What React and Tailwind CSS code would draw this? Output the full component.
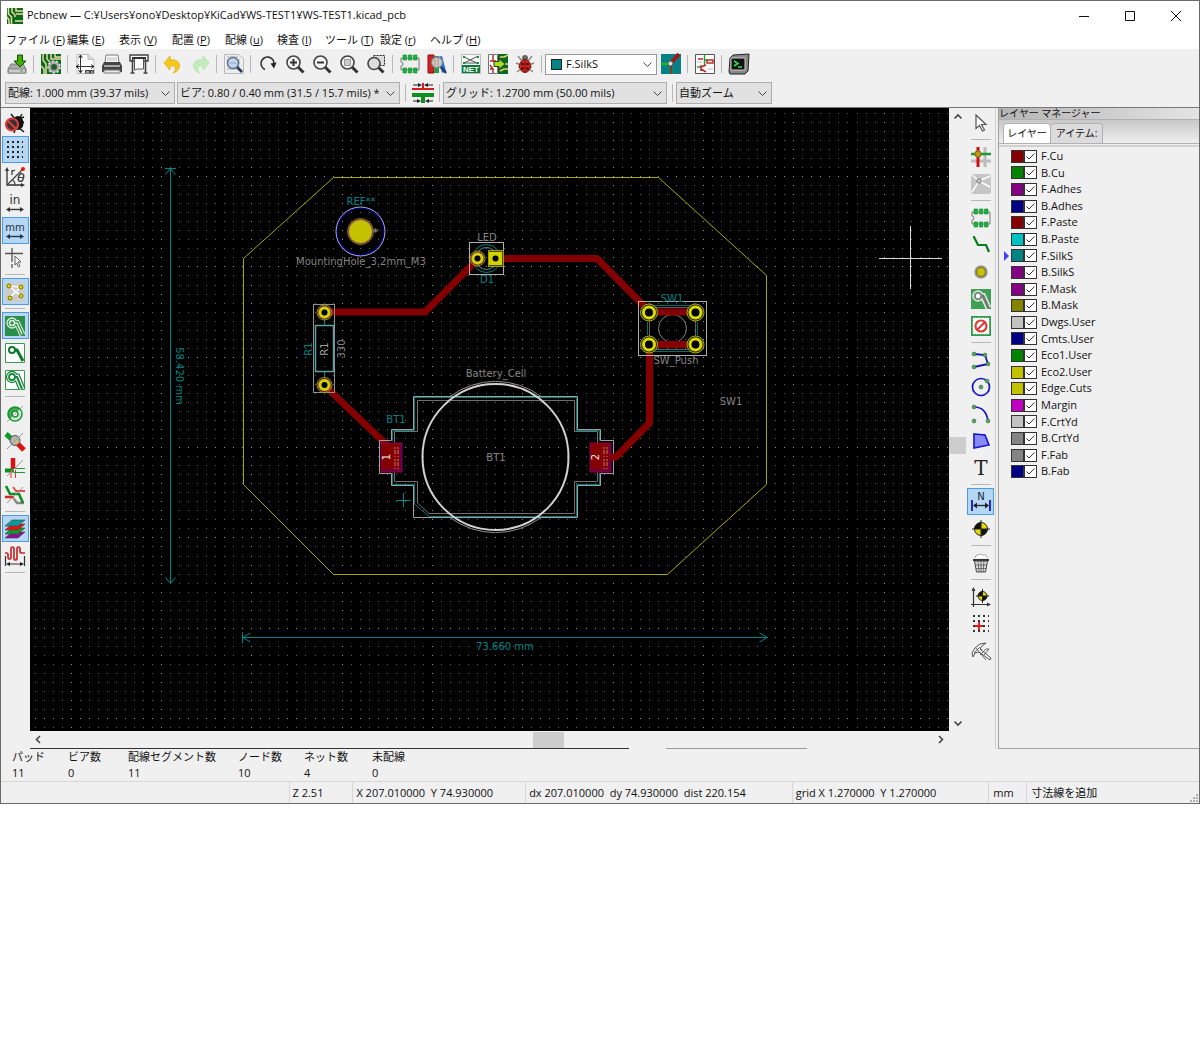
import React, { useState } from 'react';

// ---------- icons (all drawn on a 20x20 box) ----------
const Svg = ({ children }) => (
  <svg viewBox="0 0 20 20" className="h-5 w-5 shrink-0 overflow-visible" fill="none" stroke="none">{children}</svg>
);

const Slash = () => <path d="M2 18 18 2" stroke="#999" />;
const Lens = ({ children }) => (
  <Svg>
    <path d="m12.500 12.500 6 6" stroke="#333" strokeWidth="3" />
    <circle cx="8.500" cy="8.500" r="6.500" fill="#f4f4f4" stroke="#444" strokeWidth="1.600" />
    {children}
  </Svg>
);
const Track = ({ color }) => (
  <>
    <path d="M7 7h5l6 11" stroke={color} strokeWidth="3" />
    <circle cx="7" cy="7" r="3" fill="#fff" stroke={color} strokeWidth="2" />
  </>
);

const icons = {
  save: (
    <Svg>
      <path d="M4 10h12l3 5v4H1v-4z" fill="#aaa" stroke="#777" />
      <path d="M1.500 15h17v4h-17z" fill="#ccc" stroke="#888" />
      <path d="M10.500 1h5v6h3.500l-6 6-6-6h3.500z" fill="#3fae00" stroke="#174d00" />
      <path d="M13 17h3" stroke="#4a4" />
    </Svg>
  ),
  board: (
    <Svg>
      <path d="M0 0h20v20H0z" fill="#0a6a1c" />
      <path d="M2 0v6l3 4v10M6 0v5l3 3M10 0v5h10M0 12l3 3v5M14 0v3h6" stroke="#e6d9a0" strokeWidth="1.500" />
      <circle cx="13" cy="13" r="4.500" stroke="#aaa" strokeWidth="3" />
      <circle cx="13" cy="13" r="6" stroke="#ddd" strokeWidth="1.600" strokeDasharray="2.200 2" />
      <circle cx="13" cy="13" r="2.500" stroke="#555" />
    </Svg>
  ),
  sheet: (
    <Svg>
      <path d="M2 .500h11l6 5v14H2z" fill="#fff" stroke="#bbb" />
      <path d="M13 .500v5h6" fill="#ddd" stroke="#bbb" />
      <path d="M5.500 1v18M1 12.500h18M3.500 4l2-3 2 3M3.500 16l2 3 2-3M4 10.500l-3 2 3 2M16 10.500l3 2-3 2" stroke="#333" />
      <path d="M10 16h9v3.500h-9z" fill="#444" />
      <path d="M11 18h3m2 0h2" stroke="#fff" />
    </Svg>
  ),
  print: (
    <Svg>
      <path d="M4 1h12l1 8H3z" fill="#fff" stroke="#777" />
      <path d="M5 4h10M5 6h10" stroke="#bbb" />
      <path d="M2 8h16l2 4v6H0v-6z" fill="#444" />
      <path d="M2 12h16" stroke="#aaa" strokeWidth="2" />
      <path d="M2 16h16v3H2z" fill="#e8e8e8" stroke="#777" />
    </Svg>
  ),
  plot: (
    <Svg>
      <path d="M1 1h18v6H1z" fill="#fafafa" stroke="#444" strokeWidth="1.400" />
      <path d="M3.500 5v14M16.500 5v14M1.500 19h4M14.500 19h4" stroke="#444" strokeWidth="1.600" />
      <path d="M5.500 4h9v11h-6l-3 1z" fill="#fff" stroke="#555" />
      <path d="M3 4h14" stroke="#333" strokeWidth="2" />
    </Svg>
  ),
  undo: (
    <Svg>
      <path d="M7 2v4c7-1 11 3 9 8-1 3-3 4-6 5 4-4 3-8-3-7v4L1 9z" fill="#f4c81d" stroke="#e0a800" strokeWidth=".700" />
    </Svg>
  ),
  redo: (
    <Svg>
      <path d="M13 2v4C6 5 2 9 4 14c1 3 3 4 6 5-4-4-3-8 3-7v4l6-7z" fill="#c3ecbb" stroke="#b0dfa8" strokeWidth=".700" />
    </Svg>
  ),
  find: (
    <Svg>
      <path d="M.500.500h14l5 4v15h-19z" fill="#eee" stroke="#bbb" />
      <path d="M3 3h11M3 6h13M3 9h13M3 12h13M3 15h13" stroke="#aaa" />
      <path d="m12 12 6 6" stroke="#223a66" strokeWidth="2.600" />
      <circle cx="9" cy="9" r="5.500" fill="#c6d5ea" stroke="#5a6f96" strokeWidth="1.400" />
      <path d="M5.500 9h7" stroke="#8fa3c4" />
    </Svg>
  ),
  refresh: (
    <Svg>
      <path d="M7 15.500A6.500 6.500 0 1 1 16 10" stroke="#333" strokeWidth="1.600" />
      <path d="m12.500 9.500 6-1-2.500 6z" fill="#222" />
    </Svg>
  ),
  zoomIn: <Lens><path d="M8.500 5v7M5 8.500h7" stroke="#333" strokeWidth="2" /></Lens>,
  zoomOut: <Lens><path d="M5 8.500h7" stroke="#333" strokeWidth="2" /></Lens>,
  zoomFit: <Lens><path d="M5.500 5.500h6v6h-6z" fill="#ccc" stroke="#999" /></Lens>,
  zoomArea: (
    <Svg>
      <path d="M7.500 1.500h11v10h-11z" fill="#ddd" stroke="#222" strokeDasharray="2 1" />
      <path d="m12 13 5.500 5.500" stroke="#333" strokeWidth="3" />
      <circle cx="8" cy="9.500" r="6" fill="#ddd" stroke="#444" strokeWidth="1.600" />
    </Svg>
  ),
  footprint: (
    <Svg>
      <path d="M1 4h18v12H1v-4a2 2 0 0 0 0-4z" fill="#eee" stroke="#777" />
      <path d="M3 1h3.500v5H3zM8.300 1h3.500v5H8.300zM13.500 1H17v5h-3.500zM3 14h3.500v5H3zM8.300 14h3.500v5H8.300zM13.500 14H17v5h-3.500z" fill="#12b83a" stroke="#1d7d30" strokeWidth=".600" />
    </Svg>
  ),
  library: (
    <Svg>
      <path d="M1 1h6v18H1z" fill="#d81e1e" stroke="#8b0e0e" />
      <path d="M7 2h5v17H7z" fill="#24a048" />
      <path d="m11 3 4-1 4 15-4 2z" fill="#2b6de0" />
      <path d="m13 12 6 7" stroke="#223a66" strokeWidth="2.500" />
      <circle cx="10" cy="8.500" r="5.500" fill="#b9d6cf" stroke="#78828c" strokeWidth="1.300" />
      <path d="M8 5v7M11 4v9" stroke="#e77" />
    </Svg>
  ),
  netlist: (
    <Svg>
      <path d="M.500.500h19v19H.500z" fill="#f6f6f6" stroke="#bbb" />
      <path d="M3 3l13 6M17 2 3 9M4 9h13" stroke="#555" />
      <path d="M2 2h2v2H2zM16 2h2v2h-2zM2 8h2v2H2zM16 8h2v2h-2z" fill="#1a8f3a" />
      <path d="M1 11h18v8H1z" fill="#0a7a3a" />
      <text x="10" y="18" textAnchor="middle" fontSize="8" fontWeight="700" fontFamily="Liberation Sans, sans-serif" fill="#fff">NET</text>
    </Svg>
  ),
  update: (
    <Svg>
      <path d="M.500.500h9v19h-9z" fill="#fff" stroke="#777" />
      <path d="M10 0h10v20H10z" fill="#0a6a1c" />
      <path d="M5 1v6M2 7h6M2 11l3 4H2m3 0v4" stroke="#c02020" strokeWidth="1.400" />
      <path d="M12 3h4l4-2M12 17l4-2h4M16 10h4" stroke="#e6d080" strokeWidth="1.500" />
      <path d="M6 7.500h5V4.500l6 5.500-6 5.500v-3H6z" fill="#a5e01c" stroke="#333" />
    </Svg>
  ),
  bug: (
    <Svg>
      <path d="M3 2l4 5M17 2l-4 5M1 9l5 2M19 9l-5 2M2 18l5-4M18 18l-5-4M3 13h14" stroke="#888" strokeWidth="1.400" />
      <circle cx="10" cy="4" r="3" fill="#666" />
      <ellipse cx="10" cy="12" rx="5.500" ry="6.500" fill="#d22a1e" stroke="#7a150c" />
      <path d="M10 6v12" stroke="#711" />
      <circle cx="7.500" cy="10" r="1.300" fill="#400" /><circle cx="12.500" cy="10" r="1.300" fill="#400" />
      <circle cx="7.500" cy="14.500" r="1.300" fill="#400" /><circle cx="12.500" cy="14.500" r="1.300" fill="#400" />
    </Svg>
  ),
  layerPair: (
    <Svg>
      <path d="M0 0h20v20H0z" fill="#087f84" />
      <path d="M0 10h9M10 11v9" stroke="#18b42a" strokeWidth="2.500" />
      <path d="m10 9 8-9" stroke="#a01818" strokeWidth="4" />
      <path d="M10 9v11" stroke="#a01818" strokeWidth="1.500" />
      <circle cx="9.500" cy="9.500" r="2.500" fill="#ddd" stroke="#555" />
    </Svg>
  ),
  schematic: (
    <Svg>
      <path d="M.500.500h19v19H.500z" fill="#fcfcfc" stroke="#555" />
      <path d="M9.500 1v10M9.500 6h3M2 13h4" stroke="#18a030" strokeWidth="1.400" />
      <path d="M12 6h6v3h-6zM6 11v6M6 13l5-2M6 15l5 3M3 5h5" stroke="#c02a2a" strokeWidth="1.500" />
      <path d="M2 8h5M13 15h5" stroke="#bbb" />
    </Svg>
  ),
  terminal: (
    <Svg>
      <path d="m4 1 16-1-1 17-3 3H1L0 18 1 4z" fill="#888" stroke="#222" />
      <path d="M2 4h14v12H2z" fill="#111" stroke="#ccc" />
      <path d="m5 7 4 2.500L5 12M9 13h4" stroke="#2ee05a" strokeWidth="1.600" />
    </Svg>
  ),
  trackWidth: (
    <svg viewBox="0 0 22 20" className="h-5 w-[22px]" fill="none">
      <path d="M0 6h22" stroke="#d81b1b" strokeWidth="2" />
      <path d="M0 12h22" stroke="#0c8f1f" strokeWidth="4" />
      <path d="M11 0v5" stroke="#d81b1b" strokeWidth="2" />
      <path d="M11 13v7" stroke="#0c8f1f" strokeWidth="4" />
      <path d="M1 2h7M21 2h-7M1 18h6M21 18h-6" stroke="#222" />
      <path d="m6 0 4 2-4 2zM16 0l-4 2 4 2zM5 16l4 2-4 2zM17 16l-4 2 4 2z" fill="#222" />
    </svg>
  ),
  drcOff: (
    <Svg>
      <path d="m6 1 4 5M17 1l-3 5M12 12l7-3M13 6l6-2M14 15l5 4M10 17l-1 3" stroke="#111" strokeWidth="1.400" />
      <ellipse cx="13" cy="10" rx="5.500" ry="7" fill="#111" />
      <circle cx="7" cy="11.500" r="6" fill="#333" stroke="#dc3c3c" strokeWidth="2.200" />
      <path d="m3 8 8 8" stroke="#dc3c3c" strokeWidth="2.200" />
    </Svg>
  ),
  grid: (
    <Svg>
      {[2, 7, 12, 17].map((y) => (
        <path key={y} d={`M2 ${y}h16`} stroke="#222" strokeWidth="2" strokeDasharray="2 3" />
      ))}
    </Svg>
  ),
  polar: (
    <Svg>
      <path d="M2 2v16h16" stroke="#333" strokeWidth="1.300" />
      <path d="m2 0 2 4H0zM20 18l-4 2v-4z" fill="#333" />
      <path d="M2 18 18 2M7 13q3 1 3 5M7 3v5M7 5q1-2 3-1.500" stroke="#444" strokeWidth="1.300" />
      <ellipse cx="16" cy="10.500" rx="2.500" ry="4" stroke="#444" strokeWidth="1.500" transform="rotate(15 16 10.500)" />
      <path d="M13.500 10.500h5" stroke="#444" />
      <circle cx="18" cy="2" r="2" fill="#f01010" />
    </Svg>
  ),
  inch: (
    <Svg>
      <text x="10" y="10" textAnchor="middle" fontSize="12" fontFamily="DejaVu Sans, sans-serif" fill="#333">in</text>
      <path d="M3 15.500h14" stroke="#333" strokeWidth="1.400" />
      <path d="m1 15.500 4-2.500v5zM19 15.500l-4-2.500v5z" fill="#333" />
    </Svg>
  ),
  mm: (
    <Svg>
      <text x="10" y="10" textAnchor="middle" fontSize="10" fontFamily="DejaVu Sans, sans-serif" fill="#234">mm</text>
      <path d="M3 15.500h14" stroke="#234" strokeWidth="1.400" />
      <path d="m1 15.500 4-2.500v5zM19 15.500l-4-2.500v5z" fill="#234" />
    </Svg>
  ),
  crosshair: (
    <Svg>
      <path d="M7 0v14M0 5.500h18M7 16v4" stroke="#555" strokeWidth="1.300" />
      <path d="m10 8 6 6h-3l2 4-1.500 1-2-4-1.500 2z" fill="#fff" stroke="#666" />
    </Svg>
  ),
  ratsnest: (
    <Svg>
      <path d="M0 0h20v20H0z" fill="#ccc" />
      <path d="M4 4l12 10M16 5 4 16M16 14 9 9M4 4l12 1" stroke="#fff" strokeWidth="1.500" />
      <circle cx="4" cy="4" r="2" fill="#e0dc00" stroke="#777600" /><circle cx="16" cy="5" r="2" fill="#e0dc00" stroke="#777600" />
      <circle cx="5" cy="16" r="2" fill="#e0dc00" stroke="#777600" /><circle cx="16" cy="14" r="2" fill="#e0dc00" stroke="#777600" />
    </Svg>
  ),
  zoneFill: (
    <Svg>
      <path d="M0 0h20v20H0z" fill="#2a8f48" />
      <path d="M7 7h5l5.500 12" stroke="#dff0e0" strokeWidth="6" />
      <circle cx="7" cy="7" r="5" fill="#2a8f48" stroke="#dff0e0" strokeWidth="1.300" />
      <path d="M7 7h5l5.500 12" stroke="#2a8f48" strokeWidth="4" />
      <path d="M8 7h4l5 11" stroke="#dff0e0" strokeWidth="1.500" />
      <circle cx="7" cy="7" r="2.500" fill="#2a8f48" stroke="#dff0e0" strokeWidth="1.500" />
    </Svg>
  ),
  zoneNone: (
    <Svg>
      <path d="M.500.500h19v19H.500z" fill="#fff" stroke="#3a9a50" />
      <Track color="#0c7a2c" />
    </Svg>
  ),
  zoneOutline: (
    <Svg>
      <path d="M.500.500h19v19H.500z" fill="#fff" stroke="#3a9a50" />
      <path d="M7 7h5l5 12" stroke="#18853a" strokeWidth="7" />
      <circle cx="7" cy="7" r="5.500" fill="#fff" stroke="#18853a" strokeWidth="1.300" />
      <path d="M7 7h5l5 12" stroke="#fff" strokeWidth="4.500" />
      <path d="M7 7h5l5 12" stroke="#18853a" strokeWidth="2" />
      <circle cx="7" cy="7" r="3" fill="#fff" stroke="#18853a" strokeWidth="1.800" />
    </Svg>
  ),
  viaSketch: (
    <Svg>
      <circle cx="10" cy="10" r="7" fill="#fff" stroke="#1a9a30" strokeWidth="1.600" />
      <path d="M10 3a7 7 0 0 0-5 12L15 5a7 7 0 0 0-5-2z" fill="#1a9a30" />
      <circle cx="10" cy="10" r="3" fill="#fff" stroke="#1a9a30" strokeWidth="1.600" />
      <circle cx="10" cy="10" r="5" stroke="#8fce9a" strokeWidth=".800" />
      <Slash />
    </Svg>
  ),
  padSketch: (
    <Svg>
      <path d="m1 3 8 7" stroke="#109a28" strokeWidth="5" />
      <path d="m11 11 8 8" stroke="#e01010" strokeWidth="5" />
      <circle cx="10" cy="9.500" r="5" fill="#b5b5b5" stroke="#555" />
      <path d="m9 10 3-2v5z" fill="#e8c410" />
      <Slash />
    </Svg>
  ),
  trackSketch: (
    <Svg>
      <path d="M8 0v11" stroke="#e01010" strokeWidth="4.500" />
      <path d="M0 12.500h9" stroke="#0c8f1f" strokeWidth="4" />
      <path d="M6 12v8M10.500 12v8" stroke="#e33" />
      <path d="M9 10.500h11M9 14.500h11" stroke="#1a9a30" />
      <Slash />
    </Svg>
  ),
  contrast: (
    <Svg>
      <path d="M1 1l4 8h5" stroke="#0c8f1f" strokeWidth="2.600" />
      <path d="M8 2l3 4h9" stroke="#e05050" strokeWidth="2" />
      <path d="M0 12h7l2 1" stroke="#d22" strokeWidth="2.400" />
      <path d="M9 14l3 4h7" stroke="#888" strokeWidth="2.400" />
      <path d="M10 9h4l4 9" stroke="#0c8f1f" strokeWidth="2.600" />
      <Slash />
    </Svg>
  ),
  layers: (
    <Svg>
      <path d="M7 13h13l-7 6H0z" fill="#8a109a" stroke="#444" strokeWidth=".600" />
      <path d="M7 9h13l-7 6H0z" fill="#109a28" stroke="#444" strokeWidth=".600" />
      <path d="M7 5h13l-7 6H0z" fill="#e61414" stroke="#444" strokeWidth=".600" />
      <path d="M7 1h13l-7 6H0z" fill="#0c9a9a" stroke="#444" strokeWidth=".600" />
    </Svg>
  ),
  microwave: (
    <Svg>
      <path d="M0 7h2q1 0 1 2v2q0 2 1.500 2T6 11V3q0-2 1.500-2T9 3v9q0 2 1.500 2T12 12V3q0-2 1.500-2T15 3v2q0 2 2 2h3" stroke="#c82828" strokeWidth="1.700" />
      <path d="M.500 10v10M19.500 10v10M3 18h14" stroke="#333" strokeWidth="1.200" />
      <path d="m1 18 4-2v4zM19 18l-4-2v4z" fill="#222" />
    </Svg>
  ),
  cursor: (
    <Svg>
      <path d="m5 2 10 9.500H10.500l3 5.500-2 1-3-5.500L5 15.500z" fill="#fff" stroke="#555" strokeWidth="1.200" />
    </Svg>
  ),
  highlight: (
    <Svg>
      <path d="M14 0v20M0 14h20" stroke="#bbb" strokeWidth="3" />
      <path d="M7 0v20" stroke="#d01010" strokeWidth="3" />
      <path d="M0 7h20" stroke="#1a9a30" strokeWidth="2.500" />
      <circle cx="7" cy="7" r="3.200" fill="#b89a18" stroke="#7a6a10" />
    </Svg>
  ),
  localRats: (
    <Svg>
      <rect width="20" height="20" rx="2" fill="#c6c6c6" />
      <path d="M8 7 1 1M8 7l11-5M8 7l11 6M8 7 1 18" stroke="#fff" strokeWidth="1.500" />
      <circle cx="8" cy="7" r="2.200" fill="#ccc" stroke="#777" />
    </Svg>
  ),
  route: <Svg><path d="M2 2h1l4 8h8l3 7" stroke="#087d18" strokeWidth="2.200" /></Svg>,
  via: (
    <Svg>
      <circle cx="10" cy="10" r="5.500" fill="#c8c000" stroke="#999" strokeWidth="2.500" />
      <circle cx="10" cy="10" r="4.500" stroke="#776f00" />
    </Svg>
  ),
  zone: (
    <Svg>
      <path d="M0 0h20v20H0z" fill="#3f9f55" />
      <path d="M7 7h5l5.500 12" stroke="#e0eee0" strokeWidth="6" />
      <circle cx="7" cy="7" r="5" fill="#3f9f55" stroke="#e0eee0" strokeWidth="1.500" />
      <path d="M8 7h4l5.500 12" stroke="#777" strokeWidth="3" />
      <circle cx="7" cy="7" r="3" fill="#fff" stroke="#888" strokeWidth="1.600" />
    </Svg>
  ),
  keepout: (
    <Svg>
      <path d="M0 0h20v20H0z" fill="#2f9a48" />
      <path d="M2 2h16v16H2z" fill="#fff" stroke="#d5efd8" strokeDasharray="1 1" />
      <circle cx="10" cy="10" r="5.500" fill="#fff" stroke="#dc3c3c" strokeWidth="2.200" />
      <path d="m14 6-8 8" stroke="#dc3c3c" strokeWidth="2.200" />
    </Svg>
  ),
  line: (
    <Svg>
      <path d="m3 4 11 1 3 9-14 3" stroke="#1414b8" strokeWidth="1.800" />
      {[[3, 4], [14, 5], [17, 14], [3, 17]].map(([x, y]) => <circle key={`${x}-${y}`} cx={x} cy={y} r="1.900" fill="#45b058" stroke="#4a6a4a" strokeWidth=".700" />)}
    </Svg>
  ),
  circle: (
    <Svg>
      <circle cx="10" cy="10" r="8.500" stroke="#1414c8" strokeWidth="1.700" />
      <circle cx="10" cy="10" r="1.900" fill="#45b058" stroke="#4a6a4a" strokeWidth=".700" />
      <circle cx="16" cy="4" r="1.900" fill="#45b058" stroke="#4a6a4a" strokeWidth=".700" />
    </Svg>
  ),
  arc: (
    <Svg>
      <path d="M3 3q12 0 14 14" stroke="#1414c8" strokeWidth="1.700" />
      {[[3, 3], [17, 17], [3, 17]].map(([x, y]) => <circle key={`${x}-${y}`} cx={x} cy={y} r="1.900" fill="#45b058" stroke="#4a6a4a" strokeWidth=".700" />)}
    </Svg>
  ),
  polygon: <Svg><path d="m3 3 11 1 4 10L3 17z" fill="#8a8aff" stroke="#1414c8" strokeWidth="1.600" /></Svg>,
  text: (
    <Svg>
      <text x="10" y="17" textAnchor="middle" fontSize="20" fontFamily="DejaVu Serif, serif" fill="#222">T</text>
    </Svg>
  ),
  dimension: (
    <Svg>
      <text x="10" y="8" textAnchor="middle" fontSize="10" fontFamily="DejaVu Sans, sans-serif" fill="#123">N</text>
      <path d="M1 8v11M19 8v11" stroke="#1414c8" strokeWidth="1.800" />
      <path d="M3 13.500h14" stroke="#222" strokeWidth="1.300" />
      <path d="m2 13.500 4-3v6zM18 13.500l-4-3v6z" fill="#222" />
    </Svg>
  ),
  target: (
    <Svg>
      <circle cx="10" cy="10" r="6.500" fill="#e6d800" stroke="#222" />
      <path d="M10 10V3.500A6.500 6.500 0 0 0 3.500 10zM10 10v6.500a6.500 6.500 0 0 0 6.500-6.500z" fill="#111" />
      <path d="M10 1v18M1 10h18" stroke="#222" />
    </Svg>
  ),
  trash: (
    <Svg>
      <path d="M4 5q0-3 3-3 2-2 5 0 4-1 4 3" fill="#fff" stroke="#aaa" />
      <path d="M2 7h16" stroke="#333" strokeWidth="2" />
      <path d="m3.500 8 2 11h9l2-11z" fill="#ddd" stroke="#444" />
      <path d="m7 8 1 11M10 8v11M13 8l-1 11M4 12h12M5 15.500h10" stroke="#555" strokeWidth=".800" />
    </Svg>
  ),
  origin: (
    <Svg>
      <path d="M2.500 2v18M0 17.500h18" stroke="#333" strokeWidth="1.200" />
      <path d="m2.500 0 2 4h-4zM20 17.500l-4 2v-4z" fill="#333" />
      <circle cx="11.500" cy="9" r="4.500" fill="#e6d800" stroke="#222" />
      <path d="M11.500 9V4.500A4.500 4.500 0 0 0 7 9zM11.500 9v4.500A4.500 4.500 0 0 0 16 9z" fill="#111" />
      <path d="M11.500 2v14M5 9h13" stroke="#222" />
    </Svg>
  ),
  gridOrigin: (
    <Svg>
      {[2, 7, 12, 17].map((y) => (
        <path key={y} d={`M2 ${y}h16`} stroke="#333" strokeWidth="2" strokeDasharray="2 3" />
      ))}
      <path d="M8 8v8M4 12h8" stroke="#e01818" strokeWidth="1.800" />
    </Svg>
  ),
  measure: (
    <Svg>
      <path d="M1 12 4 7l5-4 6-1-4 3-2 3 11 9-1 2-11-8-4 1-2 4z" fill="#f4f4f4" stroke="#444" strokeWidth=".900" />
      <path d="m5 7 10 12M9 14l6-6h3l-5 6M8 6l3 3M3 12l5-5" stroke="#555" strokeWidth=".900" />
    </Svg>
  ),
};

const topTools = [
  ['save', 'Save'], null, ['board', 'Board setup'], null,
  ['sheet', 'Page settings'], ['print', 'Print'], ['plot', 'Plot'], null,
  ['undo', 'Undo'], ['redo', 'Redo'], null, ['find', 'Find'], null,
  ['refresh', 'Refresh'], ['zoomIn', 'Zoom in'], ['zoomOut', 'Zoom out'], ['zoomFit', 'Zoom to fit'], ['zoomArea', 'Zoom to selection'], null,
  ['footprint', 'Footprint editor'], ['library', 'Footprint viewer'], null,
  ['netlist', 'Load netlist'], ['update', 'Update from schematic'], ['bug', 'Design rules check'], null,
];

const leftTools = [
  ['drcOff', 'DRC off'], ['grid', 'Grid'], ['polar', 'Polar coordinates'], ['inch', 'Inches'], ['mm', 'Millimeters'], ['crosshair', 'Cursor shape'], null,
  ['ratsnest', 'Ratsnest'], null,
  ['zoneFill', 'Filled zones'], ['zoneNone', 'Hide zones'], ['zoneOutline', 'Zone outlines'], null,
  ['viaSketch', 'Sketch vias'], ['padSketch', 'Sketch pads'], ['trackSketch', 'Sketch tracks'], ['contrast', 'High contrast'], null,
  ['layers', 'Layers manager'], ['microwave', 'Microwave tools'], null,
];
const leftActive = ['grid', 'mm', 'ratsnest', 'zoneFill', 'layers'];

const rightTools = [
  ['cursor', 'Select'], null, ['highlight', 'Highlight net'], ['localRats', 'Local ratsnest'], null,
  ['footprint', 'Add footprint'], ['route', 'Route tracks'], ['via', 'Add via'], ['zone', 'Add zone'], ['keepout', 'Add keepout'], null,
  ['line', 'Line'], ['circle', 'Circle'], ['arc', 'Arc'], ['polygon', 'Polygon'], ['text', 'Text'], null,
  ['dimension', 'Dimension'], ['target', 'Alignment target'], null, ['trash', 'Delete'], null,
  ['origin', 'Drill origin'], ['gridOrigin', 'Grid origin'], ['measure', 'Measure'],
];

const menus = [
  ['ファイル', 'F'], ['編集', 'E'], ['表示', 'V'], ['配置', 'P'], ['配線', 'u'],
  ['検査', 'I'], ['ツール', 'T'], ['設定', 'r'], ['ヘルプ', 'H'],
];

const layerList = [
  ['F.Cu', '#840000'], ['B.Cu', '#008400'], ['F.Adhes', '#840084'], ['B.Adhes', '#000084'],
  ['F.Paste', '#840000'], ['B.Paste', '#00c2c2'], ['F.SilkS', '#008484'], ['B.SilkS', '#840084'],
  ['F.Mask', '#840084'], ['B.Mask', '#848400'], ['Dwgs.User', '#c2c2c2'], ['Cmts.User', '#000084'],
  ['Eco1.User', '#008400'], ['Eco2.User', '#c2c200'], ['Edge.Cuts', '#c2c200'], ['Margin', '#c200c2'],
  ['F.CrtYd', '#c2c2c2'], ['B.CrtYd', '#848484'], ['F.Fab', '#848484'], ['B.Fab', '#000084'],
];

const stats = [
  ['パッド', 11, 'w-14'], ['ビア数', 0, 'w-15'], ['配線セグメント数', 11, 'w-[110px]'],
  ['ノード数', 10, 'w-[66px]'], ['ネット数', 4, 'w-[68px]'], ['未配線', 0, 'w-16'],
];

const Chevron = ({ className = '' }) => (
  <svg viewBox="0 0 9 5" className={`h-[5px] w-[9px] shrink-0 ${className}`} fill="none" stroke="#444">
    <path d="m.500.500 4 4 4-4" />
  </svg>
);

const ScrollArrow = ({ className = '' }) => (
  <svg viewBox="0 0 8 5" className={`h-[5px] w-2 shrink-0 overflow-visible ${className}`} fill="none" stroke="#444" strokeWidth="1.600">
    <path d="m.500.500 3.500 3.500 3.500-3.500" />
  </svg>
);

function Combo({ label, value, className }) {
  return (
    <div className={`grid h-[22px] items-center border border-[#adadad] bg-[#e1e1e1] ${className}`}>
      <select aria-label={label} className="col-start-1 row-start-1 h-full w-full appearance-none bg-transparent pr-5 pl-0.5 outline-none">
        <option>{value}</option>
      </select>
      <Chevron className="pointer-events-none col-start-1 row-start-1 mr-1 justify-self-end" />
    </div>
  );
}

const VSep = () => <div className="mx-[3px] h-[18px] w-px shrink-0 bg-[#b8b8b8]" />;
const HSep = () => <div className="my-[3px] h-px w-5 shrink-0 bg-[#b8b8b8]" />;

function ToolButton({ name, label, active }) {
  return (
    <button
      aria-label={label}
      className={`flex h-[27px] w-[27px] shrink-0 items-center justify-center border ${active ? 'border-[#4a9ce8] bg-[#b5d7f3]' : 'border-transparent'}`}
    >
      {icons[name]}
    </button>
  );
}

// ---------- board canvas ----------
// grid dots snapped to whole pixels, every tenth row and column is brighter
const PITCH = 9.033;
const dots = { minor: '', major: '' };
for (let i = 0; i < 180; i++) {
  for (let j = 0; j < 80; j++) {
    const key = i % 10 === 4 || j % 10 === 7 ? 'major' : 'minor';
    dots[key] += `M${Math.floor(5 + i * PITCH)} ${Math.floor(5.4 + j * PITCH)}h1v1h-1z`;
  }
}

const Pad = ({ x, y, r = 7 }) => (
  <g>
    <circle cx={x} cy={y} r={r + 0.5} fill="none" stroke="#a0a000" />
    <circle cx={x} cy={y} r={r - 1} fill="none" stroke="#903070" strokeWidth="1.500" />
    <circle cx={x} cy={y} r="4.500" fill="#000" stroke="#d2d200" strokeWidth="3" />
  </g>
);

const SwPad = ({ x, y }) => (
  <g>
    <circle cx={x} cy={y} r="8.500" fill="#222200" stroke="#b4b400" />
    <circle cx={x} cy={y} r="5.500" fill="#000" stroke="#dada00" strokeWidth="3" />
  </g>
);

function SmdPad({ x, num }) {
  return (
    <g>
      <rect x={x} y="443" width="21" height="29" fill="#840000" stroke="#840050" />
      <path d={`M${x + 1} 470h19V444`} stroke="#4a0090" fill="none" />
      <text transform={`translate(${x + 9} 457) rotate(-90)`} textAnchor="middle" fontSize="10" fill="#eee">{num}</text>
      <path d={`M${x + 14} 447v22M${x + 17} 447v22`} stroke="#c08080" strokeDasharray="2 1 4 2 1 2" />
    </g>
  );
}

function Board() {
  return (
    <svg className="h-full w-full bg-black" fontFamily="DejaVu Sans, sans-serif" fontSize="10">
      <path d={dots.minor} fill="#626262" shapeRendering="crispEdges" />
      <path d={dots.major} fill="#949494" shapeRendering="crispEdges" />

      <g transform="translate(-30 -108)" fill="none">
        {/* edge cuts */}
        <path d="M333.500 177.500H658.500L766.500 275.500V484.500L667.500 574.500H333.500L243.500 484.500V258.500Z" stroke="#a8a800" />

        {/* dimensions */}
        <g stroke="#008484">
          <path d="M170.500 168V583M165 168.500h11M165.500 174.500l5-6 5 6M165.500 577.500l5 6 5-6" />
          <path d="M243 637.500H767M242.500 632v11M250.500 633l-8 4.500 8 4.500M759.500 633l8 4.500-8 4.500" />
        </g>
        <text transform="translate(176 376) rotate(90)" textAnchor="middle" fill="#008484">58.420 mm</text>
        <text x="505" y="650" textAnchor="middle" fill="#008484">73.660 mm</text>

        {/* mounting hole */}
        <circle cx="360.500" cy="231.500" r="23.500" stroke="#000084" strokeWidth="1.500" />
        <circle cx="360.500" cy="231.500" r="24.500" stroke="#b0b0c8" />
        <circle cx="360.500" cy="231.500" r="13" stroke="#848400" />
        <circle cx="360.500" cy="231.500" r="12" fill="#c2c200" stroke="#a04070" />
        <text x="361" y="205" textAnchor="middle" fill="#008484">REF**</text>
        <text x="373" y="236" fill="#aaa">*</text>
        <text x="361" y="265" textAnchor="middle" fill="#848484">MountingHole_3.2mm_M3</text>

        {/* copper tracks */}
        <g stroke="#840000" strokeWidth="7" strokeLinecap="round" strokeLinejoin="round">
          <path d="M324 312H425L478 259" />
          <path d="M496 258.500H597L650 312" />
          <path d="M324 385L391 449" />
          <path d="M649.500 345V423L616 457H602" />
        </g>

        {/* LED */}
        <rect x="469.500" y="242.500" width="34" height="32" stroke="#b0b0b0" />
        <circle cx="486.500" cy="258.500" r="14" stroke="#008484" />
        <circle cx="486.500" cy="258.500" r="11" stroke="#5f9090" />
        <Pad x={477.5} y={258.5} />
        <rect x="488.500" y="250.500" width="15" height="16" fill="#4a4a00" stroke="#a0a000" />
        <rect x="489" y="252" width="13" height="13" fill="#d2d200" />
        <circle cx="495.500" cy="258.500" r="3" fill="#000" />
        <text x="487" y="241" textAnchor="middle" fill="#848484">LED</text>
        <text x="487" y="283" textAnchor="middle" fill="#008484">D1</text>

        {/* resistor */}
        <rect x="313.500" y="304.500" width="21" height="88" stroke="#909090" />
        <path d="M324.500 319v6M324.500 372v6" stroke="#008484" />
        <rect x="315.500" y="325.500" width="18" height="46" stroke="#5fa0a0" strokeWidth="1.500" />
        <Pad x={324.5} y={312.5} />
        <Pad x={324.5} y={385} />
        <text transform="translate(312 349) rotate(-90)" textAnchor="middle" fill="#008484">R1</text>
        <text transform="translate(328 349) rotate(-90)" textAnchor="middle" fill="#a0a0a0">R1</text>
        <text transform="translate(345 349) rotate(-90)" textAnchor="middle" fill="#848484">330</text>

        {/* switch */}
        <rect x="638.500" y="301.500" width="68" height="54" stroke="#b0b0b0" />
        <path d="M654 305.500H692M654 351.500H692M647.500 322v13M697.500 322v13" stroke="#007070" />
        <rect x="649.500" y="307.500" width="46" height="42" stroke="#606060" />
        <circle cx="672.500" cy="328.500" r="14" stroke="#808080" />
        <path d="M649 312H696M649 344.500H696" stroke="#840000" strokeWidth="7" />
        <SwPad x={649} y={312.5} />
        <SwPad x={695.5} y={312.5} />
        <SwPad x={649} y={344.5} />
        <SwPad x={695.5} y={344.5} />
        <text x="672" y="302" textAnchor="middle" fill="#008484">SW1</text>
        <text x="676" y="364" textAnchor="middle" fill="#848484">SW_Push</text>
        <text x="731" y="405" textAnchor="middle" fill="#848484">SW1</text>

        {/* battery holder */}
        <path d="M414.500 397.500H576.500V430.500H599.500V441M599.500 473V484.500H576.500V516.500H429L414.500 504V484.500H392.500V473M392.500 441V430.500H414.500V397" stroke="#007878" />
        <path d="M413.500 396.500H577.500V429.500H600.500V440.500H613.500V473.500H600.500V485.500H577.500V517.500H413.500V485.500H391.500V473.500H379.500V440.500H391.500V429.500H413.500Z" stroke="#a0a0a0" />
        <path d="M417.500 400.500H574.500V431.500H597.500V481.500H574.500V513.500H429L417.500 503V481.500H394.500V431.500H417.500Z" stroke="#707070" />
        <path d="M450 396.500A76 76 0 0 1 541 396.500M450 517.500A76 76 0 0 0 541 517.500" stroke="#909090" />
        <circle cx="495.500" cy="457" r="73" stroke="#d0d0d0" strokeWidth="2" />
        <path d="M396.500 500.500h14M403.500 493v14" stroke="#008484" />
        <SmdPad x={381} num="1" />
        <SmdPad x={590} num="2" />
        <path d="M610 457h6" stroke="#840000" strokeWidth="7" />
        <text x="496" y="377" textAnchor="middle" fill="#848484">Battery_Cell</text>
        <text x="396" y="423" textAnchor="middle" fill="#008484">BT1</text>
        <text x="496" y="461" textAnchor="middle" fill="#848484">BT1</text>

        {/* cursor */}
        <path d="M879 258.500h63M910.500 226v63" stroke="#d8d8d8" />
      </g>
    </svg>
  );
}

function LayerPanel() {
  const [visible, setVisible] = useState(() => layerList.map(() => true));
  const toggle = (i) => setVisible(visible.map((v, n) => (n === i ? !v : v)));

  return (
    <aside className="flex w-[201px] shrink-0 flex-col border-b border-l border-[#a0a0a0]">
      <h2 className="h-[11px] bg-linear-to-r from-[#b4b4b4] to-[#e4e4e4] text-[10px] leading-[10px] whitespace-nowrap">レイヤー マネージャー</h2>
      <div className="flex h-[25px] items-end border-t border-b border-[#b0b0b0] bg-linear-to-b from-[#c8c8c8] to-[#efefef] pl-1" role="tablist">
        <button role="tab" aria-selected="true" className="h-5 w-12 rounded-t-sm border border-b-0 border-[#b0b0b0] bg-white text-[10px]">レイヤー</button>
        <button role="tab" aria-selected="false" className="h-5 w-[52px] rounded-t-sm border border-b-0 border-l-0 border-[#b0b0b0] bg-[#dcdcdc] text-[10px]">アイテム:</button>
      </div>
      <ul className="mt-px grid h-[335px] auto-rows-fr border-t-2 border-[#d0d0d0] pt-px">
        {layerList.map(([name, color], i) => (
          <li key={name} className="flex items-center">
            <span className="flex w-3 justify-end">
              {name === 'F.SilkS' && (
                <svg viewBox="0 0 5 10" className="mr-[2px] h-[10px] w-[5px]"><path d="m0 0 5 5-5 5z" fill="#4040ff" /></svg>
              )}
            </span>
            <button aria-label={`${name} color`} className="h-[13px] w-[13px] border border-[#333]" style={{ background: color }} />
            <label className="flex items-center">
              <span className="grid h-[13px] w-[13px] place-items-center">
                <input type="checkbox" checked={visible[i]} onChange={() => toggle(i)} className="col-start-1 row-start-1 h-[13px] w-[13px] appearance-none border border-[#333] bg-white" />
                {visible[i] && (
                  <svg viewBox="0 0 9 7" className="pointer-events-none col-start-1 row-start-1 h-[7px] w-[9px]" fill="none" stroke="#333"><path d="m.500 3.500 2.500 2.500 5.500-5.500" /></svg>
                )}
              </span>
              <span className="ml-1">{name}</span>
            </label>
          </li>
        ))}
      </ul>
    </aside>
  );
}

export default function App() {
  return (
    <div className="min-h-screen bg-white">
      <div className="flex flex-col border border-[#6a6a6a] bg-[#f0f0f0] font-['Open_Sans','Noto_Sans_CJK_JP',sans-serif] text-[11px] text-[#111]">
        {/* title bar */}
        <header className="flex h-[29px] items-center bg-white pl-1.5">
          <svg viewBox="0 0 16 16" className="h-4 w-4" fill="none">
            <path d="M0 0h16v16H0z" fill="#0a6a1c" />
            <path d="M1.500 0v6l3 3v7M5 0v4l3 3v2M9 0v3h7M9 6h7M8 13h8M0 9l2 3v4" stroke="#ecd9a0" strokeWidth="1.500" />
          </svg>
          <h1 className="ml-1 flex-1 truncate text-[11px]">Pcbnew — C:¥Users¥ono¥Desktop¥KiCad¥WS-TEST1¥WS-TEST1.kicad_pcb</h1>
          {[['Minimize', 'M0 5.500h10'], ['Maximize', 'M.500.500h9v9h-9z'], ['Close', 'm0 0 10 10M10 0 0 10']].map(([label, d]) => (
            <button key={label} aria-label={label} className="flex h-full w-[46px] items-center justify-center">
              <svg viewBox="0 0 10 10" className="h-2.5 w-2.5 overflow-visible" fill="none" stroke="#111"><path d={d} /></svg>
            </button>
          ))}
        </header>

        <nav className="grid h-[19px] grid-cols-[61px_52px_53px_53px_52px_48px_55px_50px_auto] items-center justify-start bg-white pt-0.5 pl-[5px]">
          {menus.map(([name, key]) => (
            <button key={key} className="text-left whitespace-nowrap">{name} (<u>{key}</u>)</button>
          ))}
        </nav>

        {/* main toolbar */}
        <div className="flex h-[30px] items-center pl-0.5">
          {topTools.map((t, i) => (t ? <ToolButton key={t[0]} name={t[0]} label={t[1]} /> : <VSep key={i} />))}
          <div className="flex h-[21px] w-[112px] items-center border border-[#999] bg-white pr-1 pl-[5px]">
            <span className="h-[11px] w-[11px] border border-[#222] bg-[#008484]" />
            <select aria-label="Layer" className="h-full min-w-0 flex-1 appearance-none pl-1 outline-none">
              <option>F.SilkS</option>
            </select>
            <Chevron />
          </div>
          <ToolButton name="layerPair" label="Layer pair" />
          <VSep />
          <ToolButton name="schematic" label="Schematic editor" />
          <VSep />
          <ToolButton name="terminal" label="Scripting console" />
        </div>

        {/* second toolbar */}
        <div className="flex h-[28px] items-center pl-1">
          <Combo label="Track width" value="配線: 1.000 mm (39.37 mils)" className="w-[170px]" />
          <Combo label="Via size" value="ビア: 0.80 / 0.40 mm (31.5 / 15.7 mils) *" className="ml-0.5 w-[223px]" />
          <div className="ml-0.5"><VSep /></div>
          <button aria-label="Auto track width" className="flex w-[27px] justify-center">{icons.trackWidth}</button>
          <VSep />
          <Combo label="Grid" value="グリッド: 1.2700 mm (50.00 mils)" className="w-[224px]" />
          <div className="ml-0.5"><VSep /></div>
          <Combo label="Zoom" value="自動ズーム" className="w-24" />
        </div>

        {/* work area */}
        <main className="flex min-h-[642px] border-t border-[#777]">
          <div className="flex w-[29px] shrink-0 flex-col items-center pt-px pr-px">
            {leftTools.map((t, i) => (t ? <ToolButton key={t[0]} name={t[0]} label={t[1]} active={leftActive.includes(t[0])} /> : <HSep key={i} />))}
          </div>

          <div className="flex min-w-0 flex-1 flex-col">
            <div className="flex flex-1">
              <div className="relative min-w-0 flex-1">
                <div className="absolute inset-0"><Board /></div>
              </div>
              <div className="flex w-[17px] flex-col items-center">
                <button aria-label="Scroll up" className="flex h-4 items-center"><ScrollArrow className="rotate-180" /></button>
                <div className="flex-[313]" />
                <div className="h-[17px] w-full bg-[#cdcdcd]" />
                <div className="flex-[261]" />
                <button aria-label="Scroll down" className="flex h-4 items-center"><ScrollArrow /></button>
              </div>
            </div>
            <div className="flex h-[17px] items-center pr-[17px]">
              <button aria-label="Scroll left" className="flex w-4 justify-center"><ScrollArrow className="rotate-90" /></button>
              <div className="flex-[487]" />
              <div className="h-4 w-[31px] bg-[#cdcdcd]" />
              <div className="flex-[369]" />
              <button aria-label="Scroll right" className="flex w-4 justify-center"><ScrollArrow className="-rotate-90" /></button>
            </div>
            <div className="flex h-px">
              <div className="w-[64%] bg-[#333]" />
              <div className="w-[4%]" />
              <div className="w-[15%] bg-[#999]" />
            </div>
          </div>

          <div className="flex w-[30px] shrink-0 flex-col items-center border-r border-[#d0d0d0] pt-px">
            {rightTools.map((t, i) => (t ? <ToolButton key={t[0]} name={t[0]} label={t[1]} active={t[0] === 'dimension'} /> : <HSep key={i} />))}
          </div>
          <div className="w-0.5" />
          <LayerPanel />
        </main>

        {/* board stats */}
        <dl className="flex h-8 pl-[11px]">
          {stats.map(([name, value, width]) => (
            <div key={name} className={`${width} whitespace-nowrap leading-4`}>
              <dt>{name}</dt>
              <dd>{value}</dd>
            </div>
          ))}
        </dl>

        <footer className="grid h-[22px] grid-cols-[288fr_64fr_173fr_267fr_197fr_38fr_173fr] border-t border-[#d7d7d7] leading-[21px] whitespace-pre">
          <div />
          <div className="border-l border-[#d7d7d7] pl-[3px]">Z 2.51</div>
          <div className="border-l border-[#d7d7d7] pl-[3px]">{'X 207.010000  Y 74.930000'}</div>
          <div className="border-l border-[#d7d7d7] pl-[3px]">{'dx 207.010000  dy 74.930000  dist 220.154'}</div>
          <div className="border-l border-[#d7d7d7] pl-[3px]">{'grid X 1.270000  Y 1.270000'}</div>
          <div className="border-l border-[#d7d7d7] pl-1">mm</div>
          <div className="flex justify-between border-l border-[#d7d7d7] pl-1">
            寸法線を追加
            <svg viewBox="0 0 10 10" className="h-2.5 w-2.5 self-end" fill="#b0b0b0">
              <path d="M7 1h2v2H7zM4 4h2v2H4zM7 4h2v2H7zM1 7h2v2H1zM4 7h2v2H4zM7 7h2v2H7z" />
            </svg>
          </div>
        </footer>
      </div>
    </div>
  );
}
